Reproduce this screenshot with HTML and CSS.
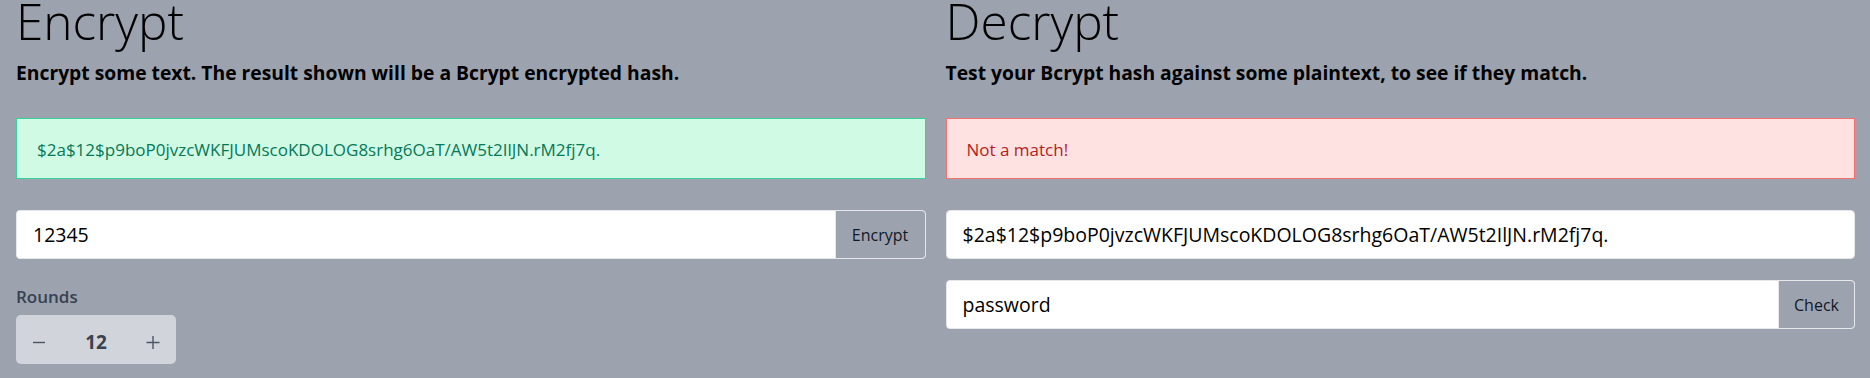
FILE: index.html
```html
<!DOCTYPE html>
<html lang="en">
<head>
    <meta charset="UTF-8">
    <meta name="viewport" content="width=device-width, initial-scale=1.0">
    <title>Bcrypt</title>
    <link rel="stylesheet" href="styles.css">
</head>
<body>

    <main class="page">
        <section class="panel">
            <h1 class="title">Encrypt</h1>
            <p class="lead">Encrypt some text. The result shown will be a Bcrypt encrypted hash.</p>
            <div class="alert alert-ok">$2a$12$p9boP0jvzcWKFJUMscoKDOLOG8srhg6OaT/AW5t2IlJN.rM2fj7q.</div>
            <div class="input-group">
                <input class="field" type="text" value="12345">
                <button class="btn" type="button">Encrypt</button>
            </div>
            <label class="label">Rounds</label>
            <div class="stepper">
                <button class="step" type="button" aria-label="decrease">
                    <svg width="14" height="14" viewBox="0 0 14 14"><path d="M1 7.5h12" stroke="#4b5563" stroke-width="1.4" fill="none"/></svg>
                </button>
                <span class="count">12</span>
                <button class="step" type="button" aria-label="increase">
                    <svg width="14" height="14" viewBox="0 0 14 14"><path d="M0.5 7.5h13M7 1v13" stroke="#4b5563" stroke-width="1.4" fill="none"/></svg>
                </button>
            </div>
        </section>

        <section class="panel">
            <h1 class="title">Decrypt</h1>
            <p class="lead">Test your Bcrypt hash against some plaintext, to see if they match.</p>
            <div class="alert alert-bad">Not a match!</div>
            <div class="input-group">
                <input class="field" type="text" value="$2a$12$p9boP0jvzcWKFJUMscoKDOLOG8srhg6OaT/AW5t2IlJN.rM2fj7q.">
            </div>
            <div class="input-group second">
                <input class="field" type="text" value="password">
                <button class="btn btn-check" type="button">Check</button>
            </div>
        </section>
    </main>

</body>
</html>
```

FILE: styles.css
```css
body {
    margin: 0;
    background-color: #9ca3af;
    font-family: "Open Sans", "Noto Sans", sans-serif;
    color: #000;
}

.page {
    display: grid;
    grid-template-columns: 1fr 1fr;
    gap: 20px;
    padding: 0 15px 0 16px;
}

.panel {
    display: flex;
    flex-direction: column;
    align-items: stretch;
}

.title {
    margin: 0;
    font-size: 49.5px;
    line-height: 42px;
    font-weight: 300;
    color: #000;
}

.lead {
    margin: 19px 0 0;
    font-size: 19.3px;
    line-height: 24px;
    font-weight: 700;
}

.alert {
    margin-top: 33px;
    height: 61px;
    box-sizing: border-box;
    display: flex;
    align-items: center;
    padding: 2px 20px 0;
    font-size: 17px;
}

.alert-ok {
    background: #d1fae5;
    border: 1px solid #34d399;
    color: #047857;
}

.alert-bad {
    background: #fee2e2;
    border: 1px solid #f87171;
    color: #b91c1c;
}

.input-group {
    margin-top: 31px;
    display: flex;
    height: 49px;
    border: 1px solid #e5e7eb;
    border-radius: 4px;
    box-sizing: border-box;
    background: #fff;
    overflow: hidden;
}

.input-group.second {
    margin-top: 21px;
}

.field {
    flex: 1;
    min-width: 0;
    border: none;
    outline: none;
    padding: 0 16px;
    font-family: "Open Sans", "Noto Sans", sans-serif;
    font-size: 19.5px;
    color: #000;
    background: #fff;
}

.btn {
    width: 91px;
    border: 1px solid #e5e7eb;
    border-radius: 0 4px 4px 0;
    margin: -1px -1px -1px 0;
    background: #9ca3af;
    font-family: "Open Sans", "Noto Sans", sans-serif;
    font-size: 16px;
    color: #111827;
    cursor: pointer;
}

.btn-check {
    width: 77px;
}

.label {
    margin-top: 26px;
    font-size: 17px;
    line-height: 24px;
    font-weight: 600;
    color: #374151;
}

.stepper {
    margin-top: 6px;
    width: 160px;
    height: 49px;
    box-sizing: border-box;
    padding: 4px 16px 0;
    display: flex;
    justify-content: space-between;
    align-items: center;
    background: #d1d5db;
    border-radius: 5px;
}

.step {
    display: flex;
    padding: 0;
    border: none;
    background: none;
    cursor: pointer;
}

.count {
    font-size: 19px;
    font-weight: 700;
    color: #374151;
}
```
